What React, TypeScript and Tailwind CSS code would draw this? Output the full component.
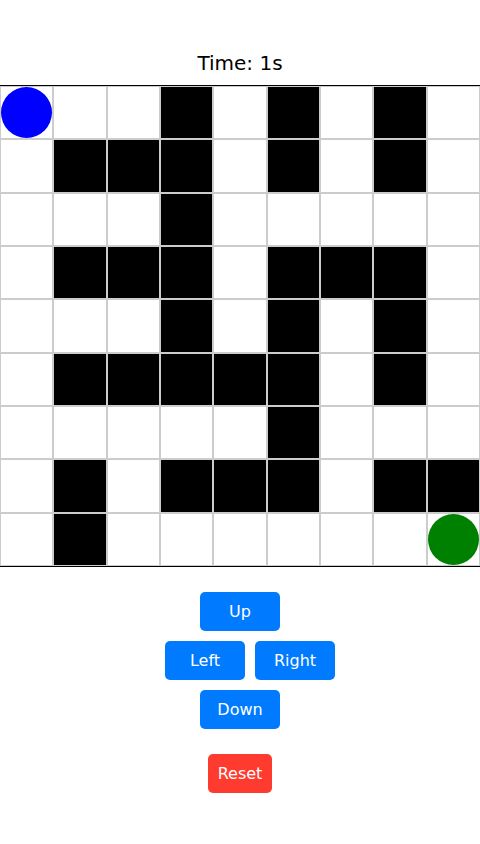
import React from "react";

const maze: number[][] = [
  [0, 0, 0, 1, 0, 1, 0, 1, 0],
  [0, 1, 1, 1, 0, 1, 0, 1, 0],
  [0, 0, 0, 1, 0, 0, 0, 0, 0],
  [0, 1, 1, 1, 0, 1, 1, 1, 0],
  [0, 0, 0, 1, 0, 1, 0, 1, 0],
  [0, 1, 1, 1, 1, 1, 0, 1, 0],
  [0, 0, 0, 0, 0, 1, 0, 0, 0],
  [0, 1, 0, 1, 1, 1, 0, 1, 1],
  [0, 1, 0, 0, 0, 0, 0, 0, 0],
];

export default function App() {
  return (
    <div
      className="flex flex-col items-center bg-white pt-[49px] text-black"
      style={{ fontFamily: '"DejaVu Sans", sans-serif' }}
    >
      <div className="text-[20px] leading-[28px] mb-[8px]">Time: 1s</div>
      <div className="grid w-full grid-cols-9 border-y border-black">
        {maze.flatMap((row, r) =>
          row.map((c, ci) => (
            <div
              key={`${r}-${ci}`}
              className={`aspect-square border border-[#ccc] ${c ? "bg-black" : "bg-white"}`}
            >
              {r === 0 && ci === 0 && (
                <div className="h-full w-full rounded-full bg-[#0000ff]" />
              )}
              {r === 8 && ci === 8 && (
                <div className="h-full w-full rounded-full bg-[#008000]" />
              )}
            </div>
          ))
        )}
      </div>
      <div className="mt-[25px] flex flex-col items-center gap-[10px]">
        <button className="h-[39px] w-[80px] rounded-[5px] bg-[#007bff] text-[16px] text-white">
          Up
        </button>
        <div className="ml-[20px] flex gap-[10px]">
          <button className="h-[39px] w-[80px] rounded-[5px] bg-[#007bff] text-[16px] text-white">
            Left
          </button>
          <button className="h-[39px] w-[80px] rounded-[5px] bg-[#007bff] text-[16px] text-white">
            Right
          </button>
        </div>
        <button className="h-[39px] w-[80px] rounded-[5px] bg-[#007bff] text-[16px] text-white">
          Down
        </button>
        <button className="mt-[15px] h-[39px] w-[64px] rounded-[5px] bg-[#ff3b30] text-[16px] text-white">
          Reset
        </button>
      </div>
    </div>
  );
}
